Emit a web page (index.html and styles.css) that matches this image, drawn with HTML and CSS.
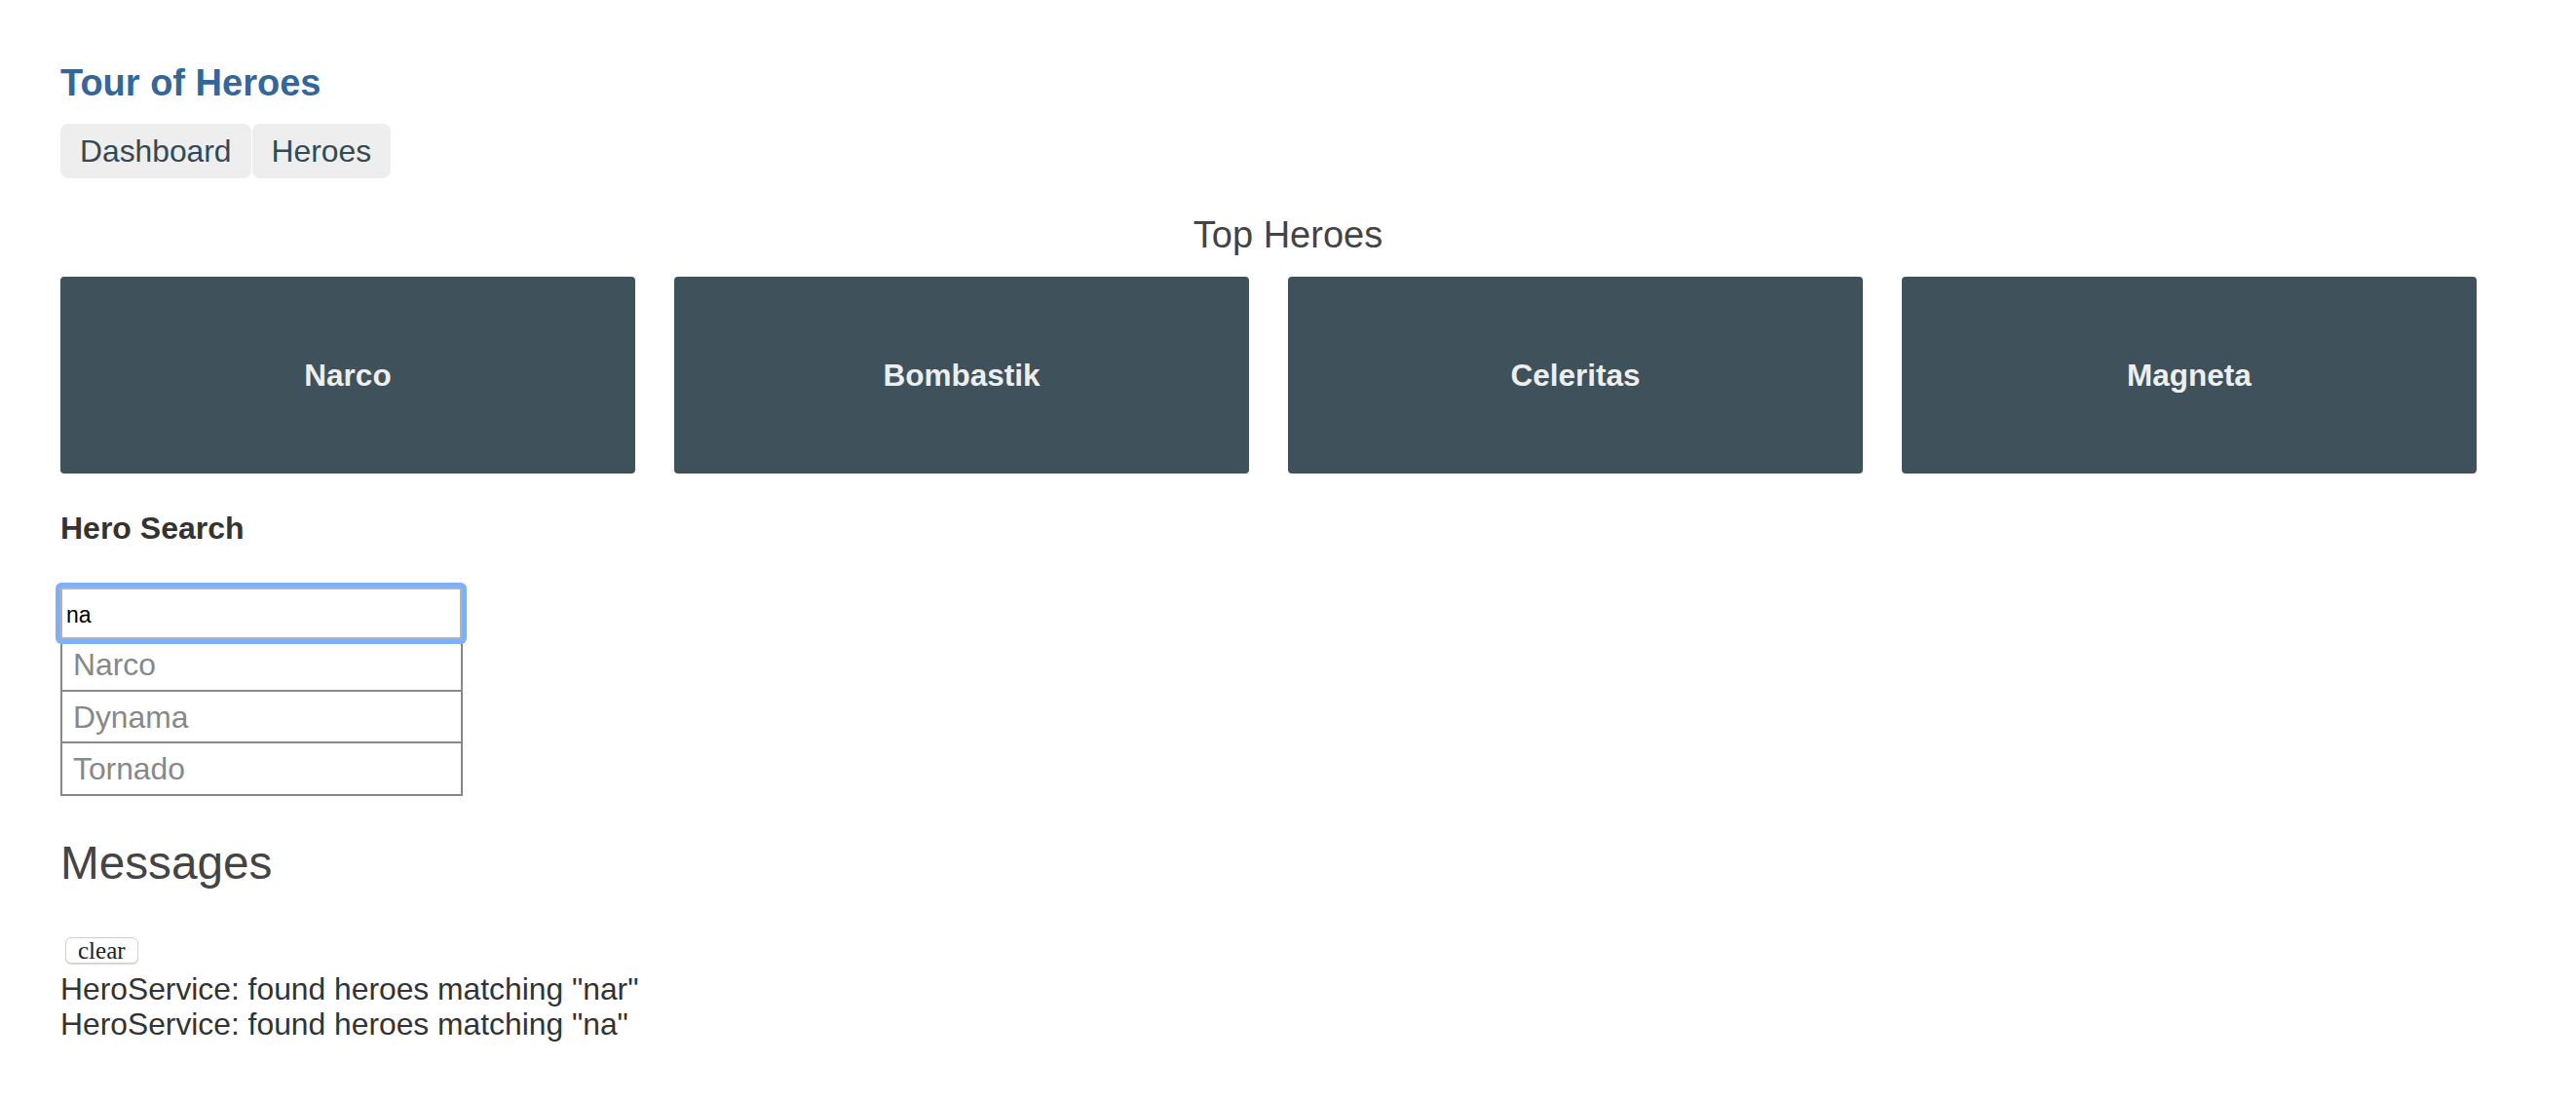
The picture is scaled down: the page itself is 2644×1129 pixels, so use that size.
FILE: index.html
```html
<!DOCTYPE html>
<html lang="en">

<head>
    <meta charset="UTF-8">
    <meta name="viewport" content="width=device-width, initial-scale=1.0">
    <title>Tour of Heroes</title>
    <link rel="stylesheet" href="styles.css">
</head>

<body>
    <div class="app">
        <h1 class="app-title">Tour of Heroes</h1>
        <nav class="main-nav">
            <a href="#">Dashboard</a>
            <a href="#">Heroes</a>
        </nav>

        <!-- Dashboard -->
        <h3 class="top-title">Top Heroes</h3>
        <div class="hero-grid">
            <a class="hero-card" href="#"><h4>Narco</h4></a>
            <a class="hero-card" href="#"><h4>Bombastik</h4></a>
            <a class="hero-card" href="#"><h4>Celeritas</h4></a>
            <a class="hero-card" href="#"><h4>Magneta</h4></a>
        </div>

        <!-- Wyszukiwarka -->
        <div class="hero-search">
            <h4><label for="search-box">Hero Search</label></h4>
            <input class="search-box is-focused" id="search-box" type="text" value="na">
            <ul class="search-result">
                <li><a href="#">Narco</a></li>
                <li><a href="#">Dynama</a></li>
                <li><a href="#">Tornado</a></li>
            </ul>
        </div>

        <!-- Komunikaty -->
        <div class="messages">
            <h2>Messages</h2>
            <button class="clear">clear</button>
            <div class="message">HeroService: found heroes matching "nar"</div>
            <div class="message">HeroService: found heroes matching "na"</div>
        </div>
    </div>
</body>

</html>
```

FILE: styles.css
```css
/* Styl dla całej strony */
body {
    margin: 0;
    font-family: "Liberation Sans", Arial, Helvetica, sans-serif;
    font-size: 31.8px;
    color: #333;
    background-color: #fff;
}

.app {
    padding: 63px 62px 40px 62px;
}

.app-title {
    margin: 0;
    font-size: 38px;
    line-height: 44px;
    font-weight: bold;
    color: #369;
}

/* Nawigacja */
.main-nav {
    display: flex;
    gap: 1px;
    margin-top: 20px;
}

.main-nav a {
    padding: 10px 20px;
    line-height: 36px;
    background-color: #eee;
    border-radius: 8px;
    color: #334953;
    text-decoration: none;
}

/* Top Heroes */
.top-title {
    margin: 37px 0 0 0;
    font-size: 38px;
    line-height: 42px;
    font-weight: normal;
    text-align: center;
    color: #444;
}

.hero-grid {
    display: grid;
    grid-template-columns: repeat(4, 1fr);
    gap: 40px;
    margin: 22px 40px 0 0;
}

.hero-card {
    height: 202px;
    display: flex;
    align-items: center;
    justify-content: center;
    background-color: #3f525c;
    border-radius: 4px;
    color: #eee;
    text-decoration: none;
}

.hero-card h4 {
    margin: 0;
    font-size: 31.5px;
    line-height: 36px;
}

/* Wyszukiwarka */
.hero-search h4 {
    margin: 38px 0 43px 0;
    font-size: 32px;
    line-height: 36px;
    color: #333;
}

.search-box {
    position: relative;
    z-index: 1;
    display: block;
    box-sizing: border-box;
    width: 412px;
    height: 53px;
    margin: 0;
    padding: 4px 4px 0 4px;
    border: 2px solid #b3b3b3;
    border-radius: 2px;
    font-family: "Liberation Sans", Arial, sans-serif;
    font-size: 23px;
    color: #000;
    outline: none;
}

.search-box.is-focused {
    box-shadow: 0 0 0 5px #7fb0f4;
}

.search-result {
    margin: 0;
    padding: 0;
    list-style: none;
    width: 413px;
}

.search-result li {
    height: 31.5px;
    padding: 11px 11px 9px 11px;
    border: 2px solid #888;
    border-top: none;
    line-height: 31.5px;
}

.search-result li a {
    display: block;
    color: #888;
    text-decoration: none;
}

/* Komunikaty */
.messages h2 {
    margin: 42.5px 0 0 0;
    font-size: 47.7px;
    line-height: 54px;
    font-weight: normal;
    color: #444;
}

.clear {
    display: block;
    margin: 49px 0 8px 5px;
    padding: 0 12px;
    height: 27px;
    line-height: 25px;
    border: 1px solid #cfcfcf;
    border-radius: 6px;
    background-color: #fff;
    box-shadow: 0 1px 1px rgba(0, 0, 0, 0.15);
    font-family: "Liberation Serif", Georgia, serif;
    font-size: 25px;
    color: #222;
}

.message {
    line-height: 36px;
    color: #333;
}
```
